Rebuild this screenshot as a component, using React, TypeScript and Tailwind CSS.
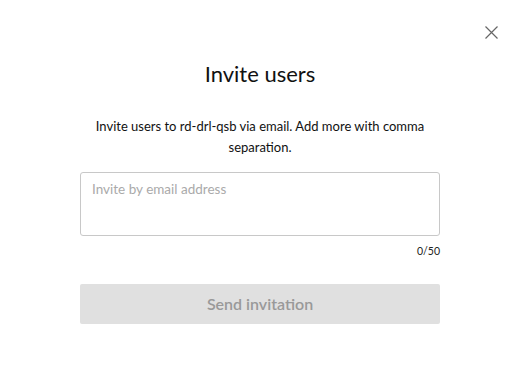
import React from "react";

export default function App() {
  return (
    <div className="w-[520px] h-[380px] bg-white relative" style={{ fontFamily: "Lato, 'Noto Sans', sans-serif" }}>
      <button className="absolute left-[485px] top-[26px] w-[13px] h-[13px] text-[#666]">
        <svg viewBox="0 0 13 13" width="13" height="13" fill="none" stroke="currentColor" strokeWidth="1.2">
          <path d="M0.5 0.5 L12.5 12.5 M12.5 0.5 L0.5 12.5" />
        </svg>
      </button>
      <div className="flex flex-col items-center pt-[60px] px-[80px]">
        <h1 className="text-[22px] leading-[28px] text-[#111]">Invite users</h1>
        <p className="mt-[28px] text-[13px] leading-[21px] text-[#111] text-center">
          Invite users to rd-drl-qsb via email. Add more with comma separation.
        </p>
        <div className="mt-[14px] w-full h-[64px] border border-[#c8c8c8] rounded-[3px] px-[11px] pt-[3px]">
          <span className="text-[13.5px] text-[#aaa]">Invite by email address</span>
        </div>
        <div className="w-full text-right text-[10.5px] leading-[14px] text-[#222] mt-[8px]">0/50</div>
        <button className="mt-[26px] w-full h-[40px] bg-[#e0e0e0] rounded-[2px] text-[16px] font-semibold text-[#999]">
          Send invitation
        </button>
      </div>
    </div>
  );
}
